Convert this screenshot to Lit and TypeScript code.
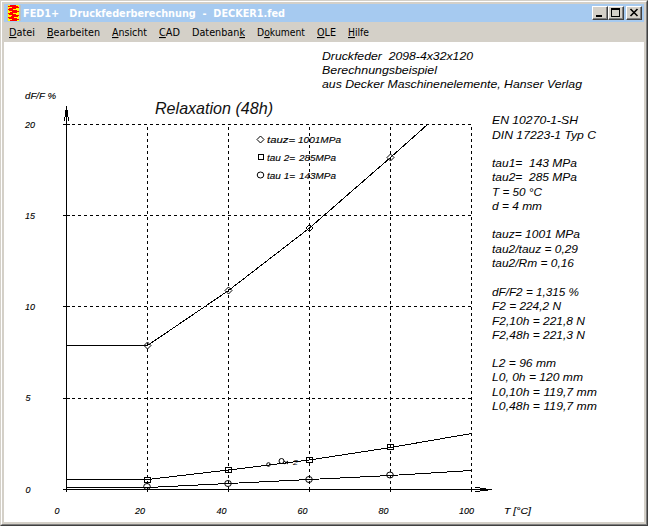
import { LitElement, html, svg, css } from "lit";
import { customElement } from "lit/decorators.js";

type Label = [x: number, y: number, width: number, text: string];

const MENU: [string, string, string, number][] = [
  ["", "D", "atei", 26], ["", "B", "earbeiten", 53], ["", "A", "nsicht", 35], ["", "C", "AD", 21],
  ["Datenban", "k", "", 53], ["D", "o", "kument", 48], ["", "O", "LE", 19], ["", "H", "ilfe", 21],
];

const NOTES: Label[] = [
  [322, 60, 151, "Druckfeder  2098-4x32x120"],
  [322, 74, 115, "Berechnungsbeispiel"],
  [322, 88, 260, "aus Decker Maschinenelemente, Hanser Verlag"],
  [492, 124, 86, "EN 10270-1-SH"],
  [492, 139, 104, "DIN 17223-1 Typ C"],
  [492, 167, 85, "tau1=  143 MPa"],
  [492, 181, 85, "tau2=  285 MPa"],
  [492, 196, 50, "T = 50 °C"],
  [492, 210, 50, "d = 4 mm"],
  [492, 238, 88, "tauz= 1001 MPa"],
  [492, 253, 86, "tau2/tauz = 0,29"],
  [492, 267, 82, "tau2/Rm = 0,16"],
  [492, 296, 87, "dF/F2 = 1,315 %"],
  [492, 310, 69, "F2 = 224,2 N"],
  [492, 325, 93, "F2,10h = 221,8 N"],
  [492, 339, 93, "F2,48h = 221,3 N"],
  [492, 367, 64, "L2 = 96 mm"],
  [492, 381, 91, "L0, 0h = 120 mm"],
  [492, 396, 105, "L0,10h = 119,7 mm"],
  [492, 410, 105, "L0,48h = 119,7 mm"],
];

const TICKS: Label[] = [
  [25, 99, 31, "dF/F %"],
  [25, 128, 10, "20"], [25, 219, 10, "15"], [25, 310, 10, "10"], [25.5, 401, 5, "5"], [25.5, 493, 5, "0"],
  [54.5, 514, 5, "0"], [135, 514, 10, "20"], [216.5, 514, 10, "40"], [297.5, 514, 10, "60"],
  [378.5, 514, 10, "80"], [459, 514, 15, "100"], [504, 514, 27, "T [°C]"],
];

const LEGEND: Label[] = [
  [267, 143, 28, "tauz="], [298, 143, 43, "1001MPa"],
  [267, 161, 28, "tau 2="], [299, 161, 37, "285MPa"],
  [267, 179, 28, "tau 1="], [299, 179, 37, "143MPa"],
];

const GRID_X = [147.5, 228.5, 309.5, 390.5, 471.5];
const GRID_Y = [124.5, 215.5, 306.5, 398.5];

// Spring symbol, one row per pixel line: start and end of the red wire.
const COIL: [number, number][] = [
  [3, 9], [1, 11], [5, 12], [2, 9], [1, 6], [2, 10], [5, 12], [3, 10],
  [1, 6], [2, 9], [5, 12], [4, 11], [1, 7], [2, 10], [5, 12], [3, 10],
];

const diamond = (x: number, y: number) =>
  svg`<path class="line" d="M${x - 3.5} ${y}L${x} ${y - 3.5}L${x + 3.5} ${y}L${x} ${y + 3.5}Z"/>`;
const square = (x: number, y: number) =>
  svg`<rect class="line crisp" x=${x - 3} y=${y - 2.5} width="6" height="5"/>`;
const circle = (x: number, y: number) =>
  svg`<ellipse class="line" cx=${x} cy=${y} rx="3.3" ry="3"/>`;
const label = ([x, y, width, text]: Label) =>
  svg`<text x=${x} y=${y} textLength=${width} lengthAdjust="spacingAndGlyphs">${text}</text>`;

@customElement("app-root")
export class AppRoot extends LitElement {
  static styles = css`
    :host { display: block; }
    .window {
      box-sizing: border-box; width: 648px; height: 526px; background: #d4d0c8;
      border: 1px solid #d4d0c8; border-right-color: #404040; border-bottom-color: #404040;
    }
    .bevel {
      box-sizing: border-box; height: 524px; padding: 2px; display: flex; flex-direction: column;
      border: 1px solid #fff; border-right-color: #808080; border-bottom-color: #808080;
    }
    .title { display: flex; align-items: center; height: 18px; background: #a6caf0; flex: none; padding: 0 2px 0 3px; }
    .logo { width: 14px; height: 16px; flex: none; }
    .caption { flex: 1; height: 18px; }
    .caption text { font: bold 11px "DejaVu Sans", sans-serif; fill: #fff; }
    .button {
      box-sizing: border-box; width: 16px; height: 14px; background: #d4d0c8; flex: none;
      border: 1px solid #fff; border-right-color: #404040; border-bottom-color: #404040;
      box-shadow: inset -1px -1px #808080;
    }
    .button.close { margin-left: 2px; }
    .button svg { display: block; width: 14px; height: 12px; }
    .menu { display: flex; height: 20px; flex: none; padding-left: 5px; gap: 12px; }
    .menu svg { display: block; height: 20px; overflow: visible; }
    .menu text { font: 11px "DejaVu Sans", sans-serif; }
    .menu tspan { text-decoration: underline; }
    .sheet { display: block; width: 640px; height: 480px; background: #fff; flex: none; }
    text { white-space: pre; fill: #000; }
    .notes text { font: italic 11.5px "Liberation Sans", sans-serif; }
    .ticks text, .legend text { font: italic 9.5px "Liberation Sans", sans-serif; stroke: #000; stroke-width: .12px; }
    .heading text { font: italic 16.5px "Liberation Sans", sans-serif; fill: #111; }
    .points text { font: italic 8px "Liberation Sans", sans-serif; }
    .line { fill: none; stroke: #000; stroke-width: 1; }
    .cross { stroke-width: 1.6; }
    .crisp { shape-rendering: crispEdges; }
    .dash { stroke-dasharray: 3 3; }
  `;

  render() {
    return html`
      <div class="window"><div class="bevel">
        <div class="title">
          <svg class="logo crisp" viewBox="0 0 14 16">
            <path fill="#c0c0c0" d="M0 0h14v16H0z"/>
            <path fill="#ffff00" d="M1 0h11v16H1z"/>
            ${COIL.map(([a, b], row) => svg`<path fill="#ff0000" d="M${a} ${row}H${b}V${row + 1}H${a}Z"/>`)}
          </svg>
          <svg class="caption">
            <text x="2" y="13" textLength="262" lengthAdjust="spacingAndGlyphs">FED1+   Druckfederberechnung  -  DECKER1.fed</text>
          </svg>
          <div class="button"><svg class="crisp"><path d="M3 8h6v2H3z"/></svg></div>
          <div class="button"><svg class="crisp"><path fill-rule="evenodd" d="M2 1h9v9H2zM3 3v6h7V3z"/></svg></div>
          <div class="button close"><svg><path class="line cross" d="M3.500 2L10.500 9M10.500 2L3.500 9"/></svg></div>
        </div>
        <div class="menu">
          ${MENU.map(([a, u, b, w]) => html`<svg width=${w}><text x="0" y="14" textLength=${w} lengthAdjust="spacingAndGlyphs">${a}<tspan>${u}</tspan>${b}</text></svg>`)}
        </div>
        <svg class="sheet" viewBox="4 42 640 480">
          <g class="line crisp">
            ${GRID_X.map((x) => svg`<path class="dash" d="M${x} 127V489"/><path d="M${x} 487V492"/>`)}
            ${GRID_Y.map((y) => svg`<path class="dash" d="M66 ${y}H472"/><path d="M63 ${y}H70"/>`)}
            <path d="M66.500 106V492M63 489.500H492"/>
          </g>
          <path class="crisp" d="M66 106H67V110H68V117H65V110H66ZM492 489V490H488V491H480V488H486V489Z"/>
          <path class="line crisp" d="M64.500 117V121M68.500 117V121M475 487.500H480M475 491.500H480"/>
          <g class="line crisp">
            <path d="M66 345.500H147.500L228.500 290.500L309.500 228L390.500 157.500L427.500 124.500"/>
            <path d="M66 479.500H147.500L228.500 470L309.500 460L390.500 447.500L471.500 433.500"/>
            <path d="M66 487.500H147.500L228.500 483.500L309.500 479.500L390.500 475.500L471.500 470.500"/>
          </g>
          ${[[147.5, 345.5], [228.5, 290.5], [309.5, 228], [390.5, 157.5], [260.5, 139.5]].map(([x, y]) => diamond(x, y))}
          ${[[147.5, 480], [228.5, 470], [309.5, 460], [390.5, 447]].map(([x, y]) => square(x, y))}
          <rect class="line crisp" x="258.500" y="154.500" width="5" height="5"/>
          ${[[147, 486.5], [228, 483.5], [309, 479.5], [390, 475], [260.5, 175]].map(([x, y]) => circle(x, y))}
          <g class="points">
            <circle class="line" cx="268.500" cy="464.500" r="1.800"/>
            <ellipse class="line" cx="281.500" cy="461" rx="2.500" ry="2.500"/>
            <path class="line" d="M278 463.500H286M284 461L288 464M288 461L284 464"/>
            ${label([293, 465, 5, "2"])}
          </g>
          <g class="heading">${label([155, 114, 118, "Relaxation (48h)"])}</g>
          <g class="legend">${LEGEND.map(label)}</g>
          <g class="ticks">${TICKS.map(label)}</g>
          <g class="notes">${NOTES.map(label)}</g>
        </svg>
      </div></div>
    `;
  }
}
